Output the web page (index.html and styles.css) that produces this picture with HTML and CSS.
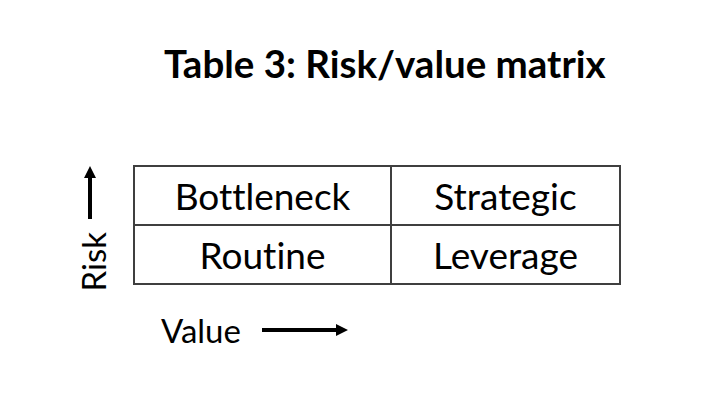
FILE: index.html
```html
<!DOCTYPE html>
<html>
<head>
<meta charset="utf-8">
<link rel="stylesheet" href="styles.css">
</head>
<body>
<div class="slide">
  <h1 class="title">Table 3: Risk/value matrix</h1>
  <div class="matrix">
    <div class="risk-axis">
      <svg class="arrow-up" width="12" height="53" viewBox="0 0 12 53">
        <path d="M6 0 L12 12 L8 12 L8 53 L4 53 L4 12 L0 12 Z" fill="#000"/>
      </svg>
      <span class="risk-label">Risk</span>
    </div>
    <table class="grid">
      <tr><td class="c1">Bottleneck</td><td class="c2">Strategic</td></tr>
      <tr><td class="c1">Routine</td><td class="c2">Leverage</td></tr>
    </table>
  </div>
  <div class="value-axis">
    <span class="value-label">Value</span>
    <svg class="arrow-right" width="86" height="12" viewBox="0 0 86 12">
      <path d="M0 4 L74 4 L74 0 L86 6 L74 12 L74 8 L0 8 Z" fill="#000"/>
    </svg>
  </div>
</div>
</body>
</html>
```
FILE: styles.css
```css
html, body {
  margin: 0;
  padding: 0;
  background: #fff;
}
.slide {
  width: 723px;
  height: 401px;
  font-family: Lato, "Open Sans", sans-serif;
  font-variant-ligatures: none;
  color: #000;
  overflow: hidden;
}
.title {
  margin: 0;
  padding: 41px 0 0 164px;
  font-size: 38.5px;
  font-weight: 700;
  line-height: 44px;
  white-space: nowrap;
}
.matrix {
  display: flex;
  align-items: flex-end;
  margin-top: 80px;
  padding-left: 78px;
}
.risk-axis {
  width: 55px;
  margin-bottom: -6px;
  display: flex;
  flex-direction: column;
  align-items: flex-start;
}
.arrow-up {
  display: block;
  margin-left: 6px;
}
.risk-label {
  writing-mode: vertical-rl;
  transform: rotate(180deg);
  font-size: 33px;
  line-height: 30px;
  margin-top: 13px;
}
.grid {
  border-collapse: collapse;
  font-size: 37px;
}
.grid td {
  border: 2px solid #3f3f3f;
  height: 57px;
  padding: 0;
  text-align: center;
  vertical-align: middle;
}
.c1 { width: 255px; }
.c2 { width: 227px; }
.value-axis {
  display: flex;
  align-items: center;
  padding: 27px 0 0 161px;
}
.value-label {
  font-size: 33px;
  line-height: 36px;
}
.arrow-right {
  display: block;
  margin-left: 21px;
}
```
